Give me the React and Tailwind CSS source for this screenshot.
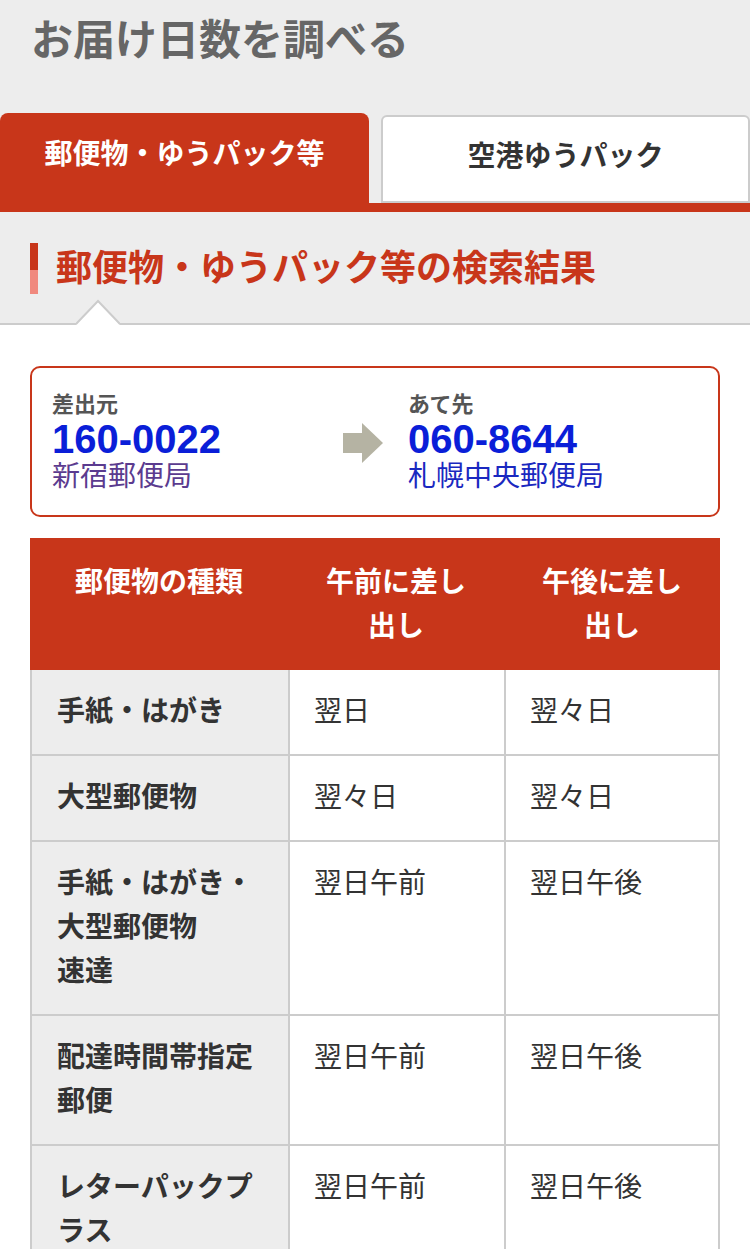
const rows = [
  { kind: ["手紙・はがき"], am: "翌日", pm: "翌々日" },
  { kind: ["大型郵便物"], am: "翌々日", pm: "翌々日" },
  { kind: ["手紙・はがき・", "大型郵便物", "速達"], am: "翌日午前", pm: "翌日午後" },
  { kind: ["配達時間帯指定", "郵便"], am: "翌日午前", pm: "翌日午後" },
  { kind: ["レターパックプ", "ラス"], am: "翌日午前", pm: "翌日午後" },
];

function Arrow() {
  return (
    <svg width="40" height="40" viewBox="0 0 40 40" className="mt-[32px] flex-none">
      <rect x="0" y="10" width="20" height="20" fill="#b5b3a3" />
      <polygon points="19,0 40,20 19,40" fill="#b5b3a3" />
    </svg>
  );
}

export default function App() {
  return (
    <div className="min-h-screen w-[750px] bg-white font-['Liberation_Sans','Noto_Sans_CJK_JP',sans-serif]">
      <div className="bg-[#ededed]">
        <h1 className="px-[31px] pt-[16px] text-[42px] font-bold leading-[50px] text-[#666]">
          お届け日数を調べる
        </h1>

        <div className="mt-[47px] flex h-[90px] items-start gap-[12px]">
          <div className="flex h-[90px] w-[369px] items-center justify-center rounded-t-[8px] bg-[#c8361a] pb-[6px] text-[28px] font-bold text-white">
            郵便物・ゆうパック等
          </div>
          <div className="mt-[2px] flex h-[88px] w-[369px] items-center justify-center rounded-t-[6px] border-2 border-[#ccc] bg-white pb-[4px] text-[28px] font-bold text-[#333]">
            空港ゆうパック
          </div>
        </div>
        <div className="h-[9px] bg-[#c8361a]" />

        <div className="relative h-[113px] border-b-2 border-[#ccc] pt-[31px]">
          <div className="ml-[30px] flex h-[51px] items-center gap-[18px]">
            <div className="flex h-[51px] w-[8px] flex-col">
              <div className="h-[27px] bg-[#c8361a]" />
              <div className="flex-1 bg-[#f0897e]" />
            </div>
            <h2 className="text-[36px] font-bold leading-none text-[#c8361a]">
              郵便物・ゆうパック等の検索結果
            </h2>
          </div>
          <svg width="44" height="26" viewBox="0 0 44 26" className="absolute bottom-[-2px] left-[76px]">
            <polygon points="0,26 22,2 44,26" fill="#fff" />
            <polyline points="0,25 22,2 44,25" fill="none" stroke="#ccc" strokeWidth="2" />
          </svg>
        </div>
      </div>

      <div className="px-[30px] pb-[40px]">
        <div className="mt-[41px] flex h-[151px] items-start rounded-[10px] border-2 border-[#c8361a] pl-[20px] pt-[23px]">
          <div className="w-[291px] flex-none">
            <p className="text-[22px] font-bold leading-[28px] text-[#555]">差出元</p>
            <p className="text-[40px] font-bold leading-[40px] text-[#0a1ed8]">160-0022</p>
            <p className="text-[28px] leading-[36px] text-[#5b3b8f]">新宿郵便局</p>
          </div>
          <Arrow />
          <div className="ml-[25px]">
            <p className="text-[22px] font-bold leading-[28px] text-[#555]">あて先</p>
            <p className="text-[40px] font-bold leading-[40px] text-[#0a1ed8]">060-8644</p>
            <p className="text-[28px] leading-[36px] text-[#1a28c0]">札幌中央郵便局</p>
          </div>
        </div>

        <div className="mt-[21px] grid grid-cols-[258px_216px_216px] text-[28px] leading-[44px]">
          <div className="h-[132px] bg-[#c8361a] pt-[23px] text-center font-bold text-white">郵便物の種類</div>
          <div className="h-[132px] bg-[#c8361a] pt-[23px] text-center font-bold text-white">
            午前に差し
            <br />
            出し
          </div>
          <div className="h-[132px] bg-[#c8361a] pt-[23px] text-center font-bold text-white">
            午後に差し
            <br />
            出し
          </div>

          {rows.map((r, i) => (
            <div key={i} className="contents">
              <div className="border-b-2 border-l-2 border-[#ccc] bg-[#ededed] pb-[20px] pl-[25px] pt-[20px] font-bold text-[#333]">
                {r.kind.map((k) => (
                  <div key={k}>{k}</div>
                ))}
              </div>
              <div className="border-b-2 border-l-2 border-[#ccc] pb-[20px] pl-[24px] pt-[20px] text-[#333]">{r.am}</div>
              <div className="border-x-2 border-b-2 border-[#ccc] pb-[20px] pl-[24px] pt-[20px] text-[#333]">{r.pm}</div>
            </div>
          ))}
        </div>
      </div>
    </div>
  );
}
